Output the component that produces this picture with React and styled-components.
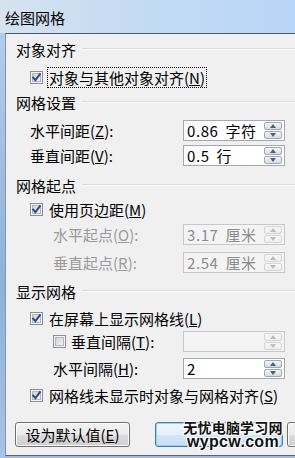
import React from "react";
import styled, { createGlobalStyle } from "styled-components";

const GlobalStyle = createGlobalStyle`
  html, body {
    margin: 0;
    padding: 0;
    background: #a9c4e2;
  }
  body {
    width: 295px;
    height: 458px;
    overflow: hidden;
  }
`;

const Window = styled.div`
  position: relative;
  width: 295px;
  height: 458px;
  display: flex;
  flex-direction: column;
  overflow: hidden;
  font-family: "Noto Sans CJK SC", "Liberation Sans", sans-serif;
  font-size: 15px;
  color: #000;
  background: linear-gradient(180deg, #b6cfea 0%, #9fbde0 100%);
`;

const TitleBar = styled.div`
  flex: none;
  height: 33px;
  display: flex;
  align-items: center;
  padding: 2px 0 0 5px;
  box-sizing: border-box;
  background: linear-gradient(90deg, #d6e3f0 0%, #c6dbf2 40%, #b8d6f8 100%);
  line-height: 1;
`;

const Body = styled.div`
  flex: 1;
  display: flex;
  min-height: 0;
`;

const Frame = styled.div`
  flex: none;
  width: 5px;
  background: linear-gradient(180deg, #b3cde9 0%, #8fb0d8 60%, #a8c3e3 100%);
`;

const Client = styled.div`
  flex: 1;
  display: flex;
  flex-direction: column;
  margin-bottom: 2px;
  padding-left: 10px;
  background: #f0f0f0;
  border-top: 1px solid #485a70;
  border-left: 1px solid #8198b2;
  border-bottom: 1px solid #55667b;
  overflow: hidden;
`;

const Heading = styled.div`
  flex: none;
  height: 24px;
  margin-top: ${(p) => p.$mt || 0}px;
  display: flex;
  align-items: center;
  gap: 6px;
  line-height: 1;
  &::after {
    content: "";
    flex: 1;
    height: 0;
    border-top: 1px solid #d5dce3;
    border-bottom: 1px solid #fbfbfb;
  }
`;

const Row = styled.div`
  flex: none;
  height: ${(p) => p.$h || 22}px;
  margin-top: ${(p) => p.$mt || 0}px;
  padding-left: ${(p) => p.$indent || 14}px;
  display: flex;
  align-items: center;
  line-height: 1;
`;

const Label = styled.span`
  flex: 1;
  margin-left: ${(p) => p.$ml || 0}px;
  white-space: nowrap;
  color: ${(p) => (p.$disabled ? "#9a9a9a" : "#000")};
`;

const CheckText = styled.span`
  margin-left: 5px;
  padding: 2px 1px;
  white-space: nowrap;
  outline: ${(p) => (p.$focus ? "1px dotted #000" : "none")};
`;

const Field = styled.div`
  flex: none;
  width: 102px;
  height: 21px;
  margin-right: 10px;
  box-sizing: border-box;
  display: flex;
  align-items: center;
  padding-left: 3px;
  border: 1px solid ${(p) => (p.$disabled ? "#c6c8cb" : "#a3a9b2")};
  background: ${(p) => (p.$disabled ? "#f4f4f4" : "#fff")};
  color: ${(p) => (p.$disabled ? "#8c8c8c" : "#000")};
`;

const Value = styled.span`
  flex: 1;
  white-space: nowrap;
  letter-spacing: 0.6px;
  word-spacing: 3px;
`;

const Spin = styled.div`
  flex: none;
  width: 18px;
  height: 17px;
  margin-right: 2px;
  display: flex;
  flex-direction: column;
  gap: 1px;
`;

const SpinHalf = styled.div`
  flex: 1;
  display: flex;
  align-items: center;
  justify-content: center;
  box-sizing: border-box;
  border: 1px solid ${(p) => (p.$disabled ? "#d2d4d6" : "#a4a8ae")};
  border-radius: 2px;
  background: ${(p) =>
    p.$disabled
      ? "linear-gradient(180deg, #f7f7f7, #eeeeee)"
      : "linear-gradient(180deg, #f6f7f9 0%, #e4e8ee 50%, #d6dce5 100%)"};
  &::before {
    content: "";
    width: 0;
    height: 0;
    border-left: 3.5px solid transparent;
    border-right: 3.5px solid transparent;
    ${(p) =>
      p.$down
        ? `border-top: 4px solid ${p.$disabled ? "#bcbcbc" : "#4d607b"};`
        : `border-bottom: 4px solid ${p.$disabled ? "#bcbcbc" : "#4d607b"};`}
  }
`;

const ButtonBar = styled.div`
  flex: none;
  height: 25px;
  margin-top: 15px;
  margin-left: -1px;
  display: flex;
  gap: 25px;
`;

const Button = styled.div`
  flex: none;
  width: ${(p) => p.$w}px;
  height: 25px;
  box-sizing: border-box;
  display: flex;
  align-items: center;
  justify-content: center;
  border-radius: 3px;
  border: 1px solid ${(p) => (p.$default ? "#3c7fb1" : "#707070")};
  background: ${(p) =>
    p.$default
      ? "linear-gradient(180deg, #f1f7fc 0%, #e5f0fa 50%, #d3e6f6 51%, #c7ddf0 100%)"
      : "linear-gradient(180deg, #f2f2f2 0%, #ebebeb 50%, #dddddd 51%, #cfcfcf 100%)"};
  box-shadow: inset 0 0 0 1px ${(p) => (p.$default ? "#9cd0ee" : "#fcfcfc")};
  line-height: 1;
  white-space: nowrap;
`;

const ButtonGroup = styled.div`
  display: flex;
  gap: 4px;
`;

const Watermark = styled.div`
  position: absolute;
  left: 183px;
  top: 420px;
  width: 100px;
  display: flex;
  flex-direction: column;
  align-items: center;
  font-weight: 700;
  color: #111;
  text-shadow: 1px 0 0 #fff, -1px 0 0 #fff, 0 1px 0 #fff, 0 -1px 0 #fff,
    1px 1px 0 #fff, -1px -1px 0 #fff, 1px -1px 0 #fff, -1px 1px 0 #fff;
`;

const MarkCn = styled.span`
  height: 15px;
  font-size: 14px;
  line-height: 15px;
  letter-spacing: 0.2px;
`;

const MarkEn = styled.span`
  height: 14px;
  font-family: "Liberation Sans", sans-serif;
  font-size: 16px;
  line-height: 14px;
  letter-spacing: 0.3px;
`;

function CheckBox({ checked }) {
  return (
    <svg width="13" height="13" viewBox="0 0 13 13" style={{ flex: "none" }}>
      <defs>
        <linearGradient id="cbIn" x1="0" y1="0" x2="1" y2="1">
          <stop offset="0" stopColor="#cbcfd5" />
          <stop offset="1" stopColor="#f7f7f7" />
        </linearGradient>
      </defs>
      <rect x="0.5" y="0.5" width="12" height="12" fill="#f4f4f4" stroke="#8e8f8f" />
      <rect x="2.5" y="2.5" width="8" height="8" fill="url(#cbIn)" stroke="#b3b7bc" />
      {checked && (
        <path
          d="M3.2 6.6 L5.4 9.2 L9.9 3.2"
          fill="none"
          stroke="#2e4a8c"
          strokeWidth="2"
          strokeLinecap="square"
        />
      )}
    </svg>
  );
}

function SpinBox({ disabled }) {
  return (
    <Spin>
      <SpinHalf $disabled={disabled} />
      <SpinHalf $disabled={disabled} $down />
    </Spin>
  );
}

function NumberRow({ label, keyChar, value, disabled, indent, mt }) {
  return (
    <Row $mt={mt} $indent={indent}>
      <Label $disabled={disabled}>
        {label}(<u>{keyChar}</u>):
      </Label>
      <Field $disabled={disabled}>
        <Value>{value}</Value>
        <SpinBox disabled={disabled} />
      </Field>
    </Row>
  );
}

export default function App() {
  return (
    <>
      <GlobalStyle />
      <Window>
        <TitleBar>绘图网格</TitleBar>
        <Body>
          <Frame />
          <Client>
            <Heading $mt={3}>对象对齐</Heading>
            <Row $h={24} $mt={4}>
              <CheckBox checked />
              <CheckText $focus>
                对象与其他对象对齐(<u>N</u>)
              </CheckText>
            </Row>

            <Heading $mt={1}>网格设置</Heading>
            <NumberRow mt={5} label="水平间距" keyChar="Z" value="0.86 字符" />
            <NumberRow mt={3} label="垂直间距" keyChar="V" value="0.5 行" />

            <Heading $mt={7}>网格起点</Heading>
            <Row $h={24}>
              <CheckBox checked />
              <CheckText>
                使用页边距(<u>M</u>)
              </CheckText>
            </Row>
            <NumberRow mt={2} indent={37} disabled label="水平起点" keyChar="O" value="3.17 厘米" />
            <NumberRow mt={6} indent={37} disabled label="垂直起点" keyChar="R" value="2.54 厘米" />

            <Heading $mt={6}>显示网格</Heading>
            <Row $h={24} $mt={3}>
              <CheckBox checked />
              <CheckText>
                在屏幕上显示网格线(<u>L</u>)
              </CheckText>
            </Row>
            <Row $indent={37}>
              <CheckBox />
              <Label $ml={5}>
                垂直间隔(<u>T</u>):
              </Label>
              <Field $disabled>
                <Value />
                <SpinBox disabled />
              </Field>
            </Row>
            <NumberRow mt={5} indent={37} label="水平间隔" keyChar="H" value="2" />
            <Row $h={24} $mt={4}>
              <CheckBox checked />
              <CheckText>
                网格线未显示时对象与网格对齐(<u>S</u>)
              </CheckText>
            </Row>

            <ButtonBar>
              <Button $w={115}>
                设为默认值(<u>E</u>)
              </Button>
              <ButtonGroup>
                <Button $w={128} $default />
                <Button $w={75} />
              </ButtonGroup>
            </ButtonBar>
          </Client>
        </Body>
        <Watermark>
          <MarkCn>无忧电脑学习网</MarkCn>
          <MarkEn>wypcw.com</MarkEn>
        </Watermark>
      </Window>
    </>
  );
}
